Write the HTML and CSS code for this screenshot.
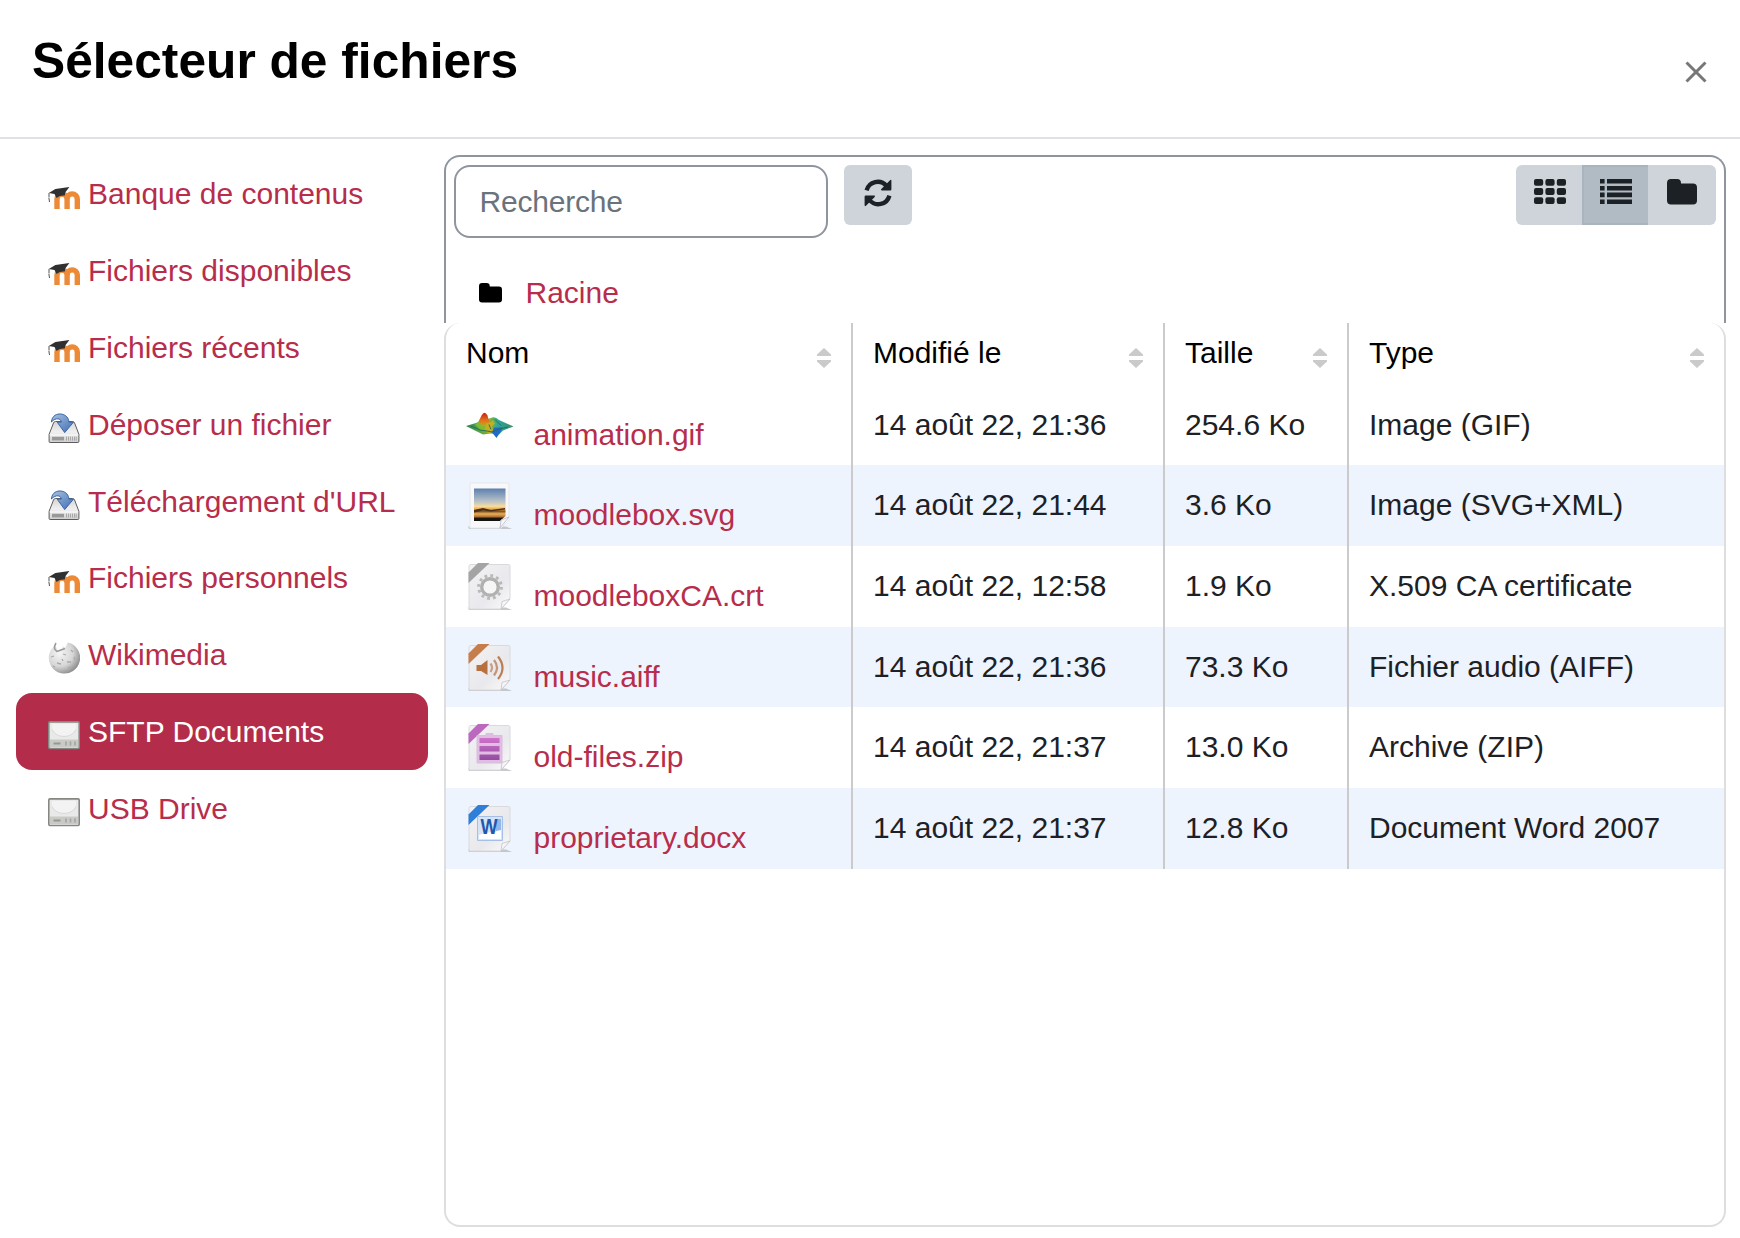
FILE: index.html
```html
<!DOCTYPE html>
<html lang="fr">
<head>
<meta charset="utf-8">
<title>Sélecteur de fichiers</title>
<link rel="stylesheet" href="styles.css">
</head>
<body>
<svg class="sprite" aria-hidden="true">
  <defs>
    <linearGradient id="metal" x1="0" y1="0" x2="0" y2="1"><stop offset="0" stop-color="#d4d4d4"/><stop offset=".5" stop-color="#f0f0f0"/><stop offset="1" stop-color="#cfcfcf"/></linearGradient>
    <linearGradient id="blue" x1="0" y1="0" x2="1" y2="1"><stop offset="0" stop-color="#a9c2e2"/><stop offset="1" stop-color="#3f6db3"/></linearGradient>
    <radialGradient id="ball" cx=".35" cy=".35" r=".7"><stop offset="0" stop-color="#f5f5f5"/><stop offset=".6" stop-color="#d6d6d6"/><stop offset="1" stop-color="#8d8d8d"/></radialGradient>
    <linearGradient id="paper" x1="0" y1="0" x2="1" y2="1"><stop offset="0" stop-color="#f3f3f5"/><stop offset=".6" stop-color="#e9e9ed"/><stop offset="1" stop-color="#fafafa"/></linearGradient>
    <linearGradient id="sky" x1="0" y1="0" x2="0" y2="1"><stop offset="0" stop-color="#5d7fae"/><stop offset=".4" stop-color="#b9c3c9"/><stop offset=".55" stop-color="#f8dc9c"/><stop offset=".64" stop-color="#e9a444"/><stop offset=".7" stop-color="#7a4c1f"/><stop offset=".78" stop-color="#e8b05a"/><stop offset=".86" stop-color="#b87835"/><stop offset=".92" stop-color="#1d1712"/><stop offset="1" stop-color="#15110f"/></linearGradient>
    <linearGradient id="surface" x1="0" y1="0" x2="1" y2="0"><stop offset="0" stop-color="#2d7d5a"/><stop offset=".25" stop-color="#4fa04a"/><stop offset=".5" stop-color="#87b52a"/><stop offset=".68" stop-color="#2aa6a0"/><stop offset="1" stop-color="#3f8a62"/></linearGradient>
    <linearGradient id="peak" x1="0" y1="0" x2="0" y2="1"><stop offset="0" stop-color="#c81e12"/><stop offset=".5" stop-color="#e2701b"/><stop offset="1" stop-color="#b9b822"/></linearGradient>
    <linearGradient id="purple" x1="0" y1="0" x2="0" y2="1"><stop offset="0" stop-color="#cf72cb"/><stop offset="1" stop-color="#934c9f"/></linearGradient>
  </defs>
  <symbol id="moodle" viewBox="0 0 32 32">
    <path d="M9 28V18a5 5 0 0 1 10.100 0v10M19.100 18a5.100 5.100 0 0 1 10.200 0v10" fill="none" stroke="#ec8a37" stroke-width="5.400"/>
    <path d="M.8 12 7.400 8 21.400 6.100 17.200 11.600 16.800 14.600C14 14.200 11 15 8.600 17L6.500 13Z" fill="#303030"/>
    <path d="M1 12v4.500M.9 17l.6 4" fill="none" stroke="#555" stroke-width="1"/>
  </symbol>
  <symbol id="deposit" viewBox="0 0 32 32">
    <path d="M7.500 10.500h17Q26 10.500 26.600 12L30.900 23.300V30.500Q30.900 31.500 29.900 31.500H2.100Q1.100 31.500 1.100 30.500V23.300L5.500 12Q6 10.500 7.500 10.500Z" fill="url(#metal)" stroke="#5c5c5c" stroke-width="1"/>
    <path d="M1.800 24h28.400" stroke="#fff" stroke-width="1"/>
    <path d="M4 25.800h12v3.600H4z" fill="#999"/>
    <path d="M18.500 25.600v4M20.500 25.600v4M22.500 25.600v4M24.500 25.600v4M26.500 25.600v4M28.200 25.600v4" stroke="#999" stroke-width=".8"/>
    <path d="M3.400 11C4 4.500 9 2.300 13.600 3.100 18 3.900 20.700 7 20.900 11.100H25.500L16.700 21.600 9.200 11.100H13.300C13 7.500 8 6 3.400 11Z" fill="url(#blue)" stroke="#3b65a5" stroke-width="1"/>
  </symbol>
  <symbol id="globe" viewBox="0 0 32 32">
    <path d="M7 3.500 10 8l4-1 1-3 2 2 3-5.500A15.700 15.700 0 1 1 1 13Q2.500 7 7 3.500Z" fill="url(#ball)"/>
    <path d="M8 1Q4.500 7 9 9.500L17 6.500" fill="none" stroke="#999" stroke-width="1.500"/>
    <path d="M3 15l3-1M15 12l3 1M23 8l2 2M9 21l4 1M19 20h4M26 15l1 3M5 24l2 1M14 17l1 2M20 26l3-1" stroke="#aaa" stroke-width="1.300"/>
  </symbol>
  <symbol id="drive" viewBox="0 0 32 32">
    <rect x=".8" y="2.900" width="30.400" height="26.600" rx="1.200" fill="#eee" stroke="#858782" stroke-width="1.600"/>
    <path d="M2 4h28v16.500H2z" fill="#e9e9e9"/>
    <path d="M4 9Q7 17 16 17T28 9V5H4Z" fill="#f3f3f3"/>
    <path d="M4 11Q8 17.500 16 17.500T28 11" fill="none" stroke="#d6d6d6" stroke-width=".8"/>
    <path d="M2 20.500h28V28H2z" fill="#c9c9c6"/>
    <path d="M5.500 24.500h7" stroke="#979792" stroke-width="2"/>
    <path d="M18 22.500v4M22.500 22.500v4M27 22.500v4" stroke="#a3a3a0" stroke-width="1.600"/>
  </symbol>
  <symbol id="folder" viewBox="0 0 30 26">
    <path d="M4 0h6q4 0 4 4v.6h12q4 0 4 4V21.500q0 4-4 4H4q-4 0-4-4V4Q0 0 4 0Z" fill="currentColor"/>
  </symbol>
  <symbol id="sort" viewBox="0 0 14 20">
    <path d="M7 0 14 6.500V8H0V6.500ZM7 20 14 13.500V12H0v1.500Z" fill="#cacaca"/>
  </symbol>
  <symbol id="page" viewBox="0 0 48 48">
    <path d="M2 44.500H40L46 47H3Z" fill="#b9bbbd" opacity=".8"/>
    <path d="M5 1.500H42.500Q44 1.500 44 3L44 36 35 46H4.500Q3 46 3 44.500V3.500Q3 1.500 5 1.500Z" fill="url(#paper)" stroke="#dadade" stroke-width="1"/>
    <path d="M35 46 36 38.500 44 36Z" fill="#f6f6f6" stroke="#c3c3c8" stroke-width=".8"/>
  </symbol>
</svg>

<header class="header">
  <h1 class="title">Sélecteur de fichiers</h1>
  <button class="close" aria-label="Fermer"><svg width="22" height="22" viewBox="0 0 22 22"><path d="M1.500 1.500 20.500 20.500M20.500 1.500 1.500 20.500" stroke="#777" stroke-width="3"/></svg></button>
</header>

<main class="body">
  <nav class="repos">
    <a class="repo"><svg class="repo-icon"><use href="#moodle"/></svg><span>Banque de contenus</span></a>
    <a class="repo"><svg class="repo-icon"><use href="#moodle"/></svg><span>Fichiers disponibles</span></a>
    <a class="repo"><svg class="repo-icon"><use href="#moodle"/></svg><span>Fichiers récents</span></a>
    <a class="repo"><svg class="repo-icon"><use href="#deposit"/></svg><span>Déposer un fichier</span></a>
    <a class="repo"><svg class="repo-icon"><use href="#deposit"/></svg><span>Téléchargement d'URL</span></a>
    <a class="repo"><svg class="repo-icon"><use href="#moodle"/></svg><span>Fichiers personnels</span></a>
    <a class="repo"><svg class="repo-icon"><use href="#globe"/></svg><span>Wikimedia</span></a>
    <a class="repo active"><svg class="repo-icon"><use href="#drive"/></svg><span>SFTP Documents</span></a>
    <a class="repo"><svg class="repo-icon"><use href="#drive"/></svg><span>USB Drive</span></a>
  </nav>

  <section class="panel">
    <div class="top">
      <div class="toolbar">
        <input class="search" type="text" placeholder="Recherche">
        <button class="refresh" aria-label="Actualiser"><svg width="28" height="28" viewBox="0 0 28 28">
          <g fill="none" stroke="#1d2125" stroke-width="4.300"><path d="M2.600 11.400A11.400 11.400 0 0 1 22.500 7"/><path d="M25.400 16.600A11.400 11.400 0 0 1 5.500 21"/></g>
          <path d="M26 1.300q1.400-1.200 1.400.6v8.300q0 1.200-1.200 1.200H18q-1.800 0-.7-1.300ZM2 26.700Q.6 27.900.6 26.100v-8.300q0-1.200 1.200-1.200H10q1.800 0 .7 1.300Z" fill="#1d2125"/></svg></button>
        <div class="views">
          <button class="view" aria-label="Icônes"><svg width="32" height="25" viewBox="0 0 32 25" fill="#1d2125"><rect width="9.200" height="6.800" rx="2"/><rect x="11.400" width="9.200" height="6.800" rx="2"/><rect x="22.800" width="9.200" height="6.800" rx="2"/><rect y="9.100" width="9.200" height="6.800" rx="2"/><rect x="11.400" y="9.100" width="9.200" height="6.800" rx="2"/><rect x="22.800" y="9.100" width="9.200" height="6.800" rx="2"/><rect y="18.200" width="9.200" height="6.800" rx="2"/><rect x="11.400" y="18.200" width="9.200" height="6.800" rx="2"/><rect x="22.800" y="18.200" width="9.200" height="6.800" rx="2"/></svg></button>
          <button class="view selected" aria-label="Liste"><svg width="32" height="25" viewBox="0 0 32 25"><path d="M0 2.300h4.600M7 2.300h25M0 9.200h4.600M7 9.200h25M0 15.900h4.600M7 15.900h25M0 22.700h4.600M7 22.700h25" stroke="#1d2125" stroke-width="4.600"/></svg></button>
          <button class="view last" aria-label="Arborescence"><svg width="30" height="26"><use href="#folder"/></svg></button>
        </div>
      </div>
      <div class="path"><svg width="23" height="20"><use href="#folder"/></svg><a>Racine</a></div>
    </div>

    <div class="content">
      <div class="row head">
        <div class="cell">Nom<svg class="sort"><use href="#sort"/></svg></div>
        <div class="cell">Modifié le<svg class="sort"><use href="#sort"/></svg></div>
        <div class="cell">Taille<svg class="sort"><use href="#sort"/></svg></div>
        <div class="cell">Type<svg class="sort"><use href="#sort"/></svg></div>
      </div>
      <div class="row">
        <div class="cell name"><svg class="file-icon" viewBox="0 -5.500 48 48"><path d="M0 18.500 10 15.500 15 13.500 25 10.500Q29 8.500 33 12.500L47.500 19 37 23 33 27 25 26 17 27Z" fill="url(#surface)"/><path d="M11 17 15.500 8Q18.500 2.500 21.500 8L23.500 15 17 20Z" fill="url(#peak)"/><path d="M9 17 13 14 16 19 22 17 19 24 14 22Z" fill="#7dbb35"/><path d="M20 16l4-1 3-2 2 3-3 3 1 4-5 3-3-4Z" fill="#c9ad20"/><path d="M26 25 28 20 37 20 34 25 30.500 30.500Z" fill="#2469c9"/><path d="M5 18.500l9 4 7 1 5 1 7-3 9-2M23 17l2 5M29 12l6 6" fill="none" stroke="#206c53" stroke-width=".9"/></svg><a>animation.gif</a></div>
        <div class="cell">14 août 22, 21:36</div><div class="cell">254.6 Ko</div><div class="cell">Image (GIF)</div>
      </div>
      <div class="row">
        <div class="cell name"><svg class="file-icon" viewBox="0 0 48 48"><path d="M2 44.500H40L46 47H3Z" fill="#b9bbbd" opacity=".8"/><path d="M4 1H43V38L35 46H4Z" fill="#f8f8fa" stroke="#e4e7ed"/><path d="M8 6.500H39.500V34L34 39H8Z" fill="url(#sky)"/><path d="M8 28l9-2 8 2 14-2v1.500l-14 2-8-1-9 2Z" fill="#4a301a"/><path d="M34 46 35 38 43 35Z" fill="#f4f5f8" stroke="#b9bcc4" stroke-width=".8"/></svg><a>moodlebox.svg</a></div>
        <div class="cell">14 août 22, 21:44</div><div class="cell">3.6 Ko</div><div class="cell">Image (SVG+XML)</div>
      </div>
      <div class="row">
        <div class="cell name"><svg class="file-icon" viewBox="0 0 48 48"><use href="#page"/><path d="M12 0H23.500L2.500 20V9.500Z" fill="#a4a4a4"/><circle cx="24" cy="24" r="8.300" fill="#f6f6f6" stroke="#b1b1b1" stroke-width="3.400"/><circle cx="24" cy="24" r="11.400" fill="none" stroke="#b8b8b8" stroke-width="3" stroke-dasharray="2.800 3.169"/></svg><a>moodleboxCA.crt</a></div>
        <div class="cell">14 août 22, 12:58</div><div class="cell">1.9 Ko</div><div class="cell">X.509 CA certificate</div>
      </div>
      <div class="row">
        <div class="cell name"><svg class="file-icon" viewBox="0 0 48 48"><use href="#page"/><path d="M12 0H23.500L2.500 20V9.500Z" fill="#c67d4c"/><path d="M10.500 21h4.500l6.500-5v15L15 27h-4.500Z" fill="#b8703e"/><g fill="none" stroke="#b98058" stroke-width="2.200"><path d="M24.500 19.500q3 4 0 8.500" opacity=".7"/><path d="M28 16q6 7.500 0 15.500" opacity=".8"/><path d="M32 12.500q9 11.500 0 22.500"/></g></svg><a>music.aiff</a></div>
        <div class="cell">14 août 22, 21:36</div><div class="cell">73.3 Ko</div><div class="cell">Fichier audio (AIFF)</div>
      </div>
      <div class="row">
        <div class="cell name"><svg class="file-icon" viewBox="0 0 48 48"><use href="#page"/><path d="M12 0H23.500L2.500 20V9.500Z" fill="#bd68bf"/><path d="M11 11.500h9V9.500h7v2h9V39H11Z" fill="#e0bde2" stroke="#d9bcdd"/><path d="M13.500 14h20v5h-20zM13.500 22h20v5.500h-20zM13.500 30.500h20V36h-20z" fill="url(#purple)"/></svg><a>old-files.zip</a></div>
        <div class="cell">14 août 22, 21:37</div><div class="cell">13.0 Ko</div><div class="cell">Archive (ZIP)</div>
      </div>
      <div class="row">
        <div class="cell name"><svg class="file-icon" viewBox="0 0 48 48"><use href="#page"/><path d="M12 0H23.500L2.500 20V9.500Z" fill="#2f7fd8"/><path d="M11.500 11.500h25V35.500h-25z" fill="#d5e4f7" stroke="#a5bfe6"/><path d="M13 30Q20 27 29 27L35 24V34H13Z" fill="#fdfeff"/><path d="M30 14h5v11l-5 1Z" fill="#91b6e8"/><text class="word" x="14.500" y="29" textLength="17" lengthAdjust="spacingAndGlyphs">W</text></svg><a>proprietary.docx</a></div>
        <div class="cell">14 août 22, 21:37</div><div class="cell">12.8 Ko</div><div class="cell">Document Word 2007</div>
      </div>
    </div>
  </section>
</main>
</body>
</html>
```
FILE: styles.css
```css
* { box-sizing: border-box; }
body {
  margin: 0;
  height: 1238px;
  overflow: hidden;
  display: flex;
  flex-direction: column;
  background: #fff;
  color: #1d2125;
  font: 30px/45px "Liberation Sans", Arial, sans-serif;
}
svg { display: block; flex: none; }
.sprite { position: absolute; width: 0; height: 0; }
a { color: #b72d4b; text-decoration: none; }
button { border: 0; padding: 0; background: none; display: flex; }

.header {
  height: 139px;
  flex: none;
  display: flex;
  justify-content: space-between;
  align-items: flex-start;
  padding: 31px 33px 0 32px;
  border-bottom: 2px solid #dee2e6;
}
.title { margin: 0; font-size: 49.7px; line-height: 60px; color: #000; }
.close { margin-top: 30px; }

.body { flex: 1; display: flex; gap: 16px; padding: 16px 14px 11px 16px; }

.repos { width: 412px; flex: none; }
.repo {
  display: flex;
  height: 76.875px;
  padding: 16px 32px;
  gap: 8px;
  border-radius: 16px;
  white-space: nowrap;
}
.repo.active { background: #b32d4a; color: #fff; }
.repo-icon { width: 32px; height: 32px; margin-top: 9.500px; }

.panel { flex: 1; display: flex; flex-direction: column; }
.top {
  height: 168px;
  border: 2px solid #8f959e;
  border-bottom: 0;
  border-radius: 16px 16px 0 0;
  padding: 8px;
}
.toolbar { display: flex; align-items: flex-start; }
.search {
  width: 374px;
  height: 73px;
  padding: 0 23.500px;
  border: 2px solid #8f959e;
  border-radius: 16px;
  font: inherit;
  letter-spacing: -.2px;
  background: #fff;
}
.search::placeholder { color: #6a737b; opacity: 1; }
.refresh {
  width: 68px;
  height: 60px;
  margin-left: 16px;
  padding: 13.500px 0 0 19.500px;
  border-radius: 6px;
  background: #ced4da;
}
.views { display: flex; margin-left: auto; border-radius: 6px; overflow: hidden; background: #ced4d9; }
.view { width: 66px; height: 60px; padding: 14px 0 0 18px; color: #1d2125; }
.view.selected { background: #b1bbc4; border: 2px solid #a9b4bf; border-right: 0; padding: 12px 0 0 16px; }
.view.last { width: 68px; padding: 14px 0 0 19px; }
.path { display: flex; gap: 23.500px; padding: 32px 0 0 25px; }
.path svg { margin-top: 12.500px; color: #000; }

.content {
  flex: 1;
  border: 2px solid #dedede;
  border-top: 0;
  border-radius: 16px;
}
.row { display: grid; grid-template-columns: 407px 312px 184px 1fr; height: 80.7px; }
.row:nth-child(odd) { background: #edf4fe; }
.row.head { height: 61.500px; background: none; color: #000; }
.cell { display: flex; padding: 17px 20px 0; white-space: nowrap; border-right: 2px solid #cbcbcb; }
.cell:last-child { border-right: 0; }
.head .cell { padding-top: 7px; justify-content: space-between; }
.sort { width: 14px; height: 20px; margin-top: 18px; }
.name { gap: 19.500px; }
.name a { padding-top: 10px; }
.file-icon { width: 48px; height: 48px; }
.word { font: bold 22px "Liberation Sans", sans-serif; fill: #2257ae; }
```
